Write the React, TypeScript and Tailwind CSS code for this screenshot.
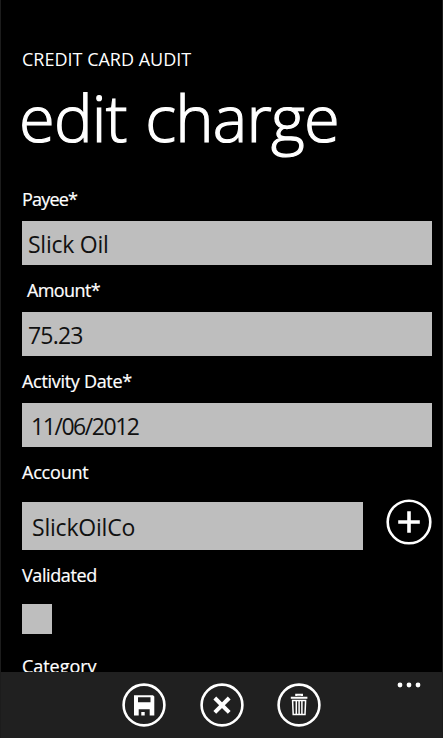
import React from 'react';

interface FieldProps {
  label: string;
  value: string;
  labelClass: string;
  valueClass: string;
}

const Field: React.FC<FieldProps> = ({ label, value, labelClass, valueClass }) => (
  <div className="mb-[15px]">
    <div className={`h-[32px] text-[18px] leading-[20px] whitespace-nowrap [-webkit-text-stroke:0.2px_white] ${labelClass}`}>{label}</div>
    <div className={`h-[44px] bg-[#bebebe] text-[#111] text-[23px] leading-[46px] whitespace-nowrap ${valueClass}`}>
      {value}
    </div>
  </div>
);

const Circle: React.FC<{ label: string; children: React.ReactNode }> = ({ label, children }) => (
  <button aria-label={label} className="block">
    <svg viewBox="0 0 44 44" className="block w-[44px] h-[44px]" fill="none">
      <circle cx="22" cy="22" r="20.4" stroke="#fff" strokeWidth="2.6" />
      {children}
    </svg>
  </button>
);

const App: React.FC = () => {
  return (
    <div className="flex flex-col w-[443px] h-[738px] overflow-hidden bg-black text-white border-x border-[#1c1c1c] font-['Open_Sans','Noto_Sans',sans-serif]">
      <main className="h-[672px] shrink-0 overflow-hidden pl-[21px] pr-[10px] pt-[47px]">
        <div className="h-[24px] text-[18px] leading-[24px] whitespace-nowrap">CREDIT CARD AUDIT</div>
        <h1 className="h-[118px] -ml-[3px] text-[65px] leading-[93px] font-light tracking-[-0.8px] [word-spacing:2.5px] whitespace-nowrap [-webkit-text-stroke:1.2px_white]">edit charge</h1>

        <Field label="Payee*" value="Slick Oil" labelClass="tracking-[-0.8px]" valueClass="pl-[6px] tracking-[-0.25px]" />
        <Field label="Amount*" value="75.23" labelClass="pl-[5px] tracking-[-0.6px]" valueClass="pl-[6px] tracking-[-0.8px]" />
        <Field label="Activity Date*" value="11/06/2012" labelClass="tracking-[-0.3px]" valueClass="pl-[9px] tracking-[-1.45px]" />

        <div className="h-[40px] text-[18px] leading-[20px] tracking-[-0.2px] [-webkit-text-stroke:0.2px_white]">Account</div>
        <div className="flex items-start justify-between h-[62px]">
          <div className="w-[341px] h-[48px] pl-[10px] bg-[#bebebe] text-[#111] text-[23px] leading-[50px] tracking-[-0.2px]">SlickOilCo</div>
          <button aria-label="add account" className="-mt-[3px]">
            <svg viewBox="0 0 46 46" className="block w-[46px] h-[46px]" fill="none" stroke="#fff">
              <circle cx="23" cy="23" r="21.3" strokeWidth="2.6" />
              <path d="M23 12.2v21.6M12.2 23h21.6" strokeWidth="3.6" />
            </svg>
          </button>
        </div>

        <div className="h-[40px] pt-px text-[18px] leading-[20px] tracking-[-0.4px] [-webkit-text-stroke:0.2px_white]">Validated</div>
        <div className="w-[30px] h-[30px] mb-[22px] bg-[#bebebe]" />
        <div className="text-[18px] leading-[20px] tracking-[-0.05px] [-webkit-text-stroke:0.2px_white]">Category</div>
      </main>

      <footer className="flex items-start h-[66px] shrink-0 bg-[#202020] pl-[121px] pt-[11px]">
        <div className="flex gap-[33.5px]">
          <Circle label="save">
            <path fill="#fff" fillRule="evenodd" d="M12 12.2h19l1.3 1.3v19H12zM16 14.3v5h12.5v-5zM16.7 26.3v6.2h2.6v-3.4h3.4v3.4h5v-6.2z" />
          </Circle>
          <Circle label="cancel">
            <path d="M14.8 15l14.4 14.4M29.2 15L14.8 29.4" stroke="#fff" strokeWidth="4" />
          </Circle>
          <Circle label="delete">
            <path d="M13.8 14.8h16.6M19.2 13v-1.3h5.8V13" stroke="#fff" strokeWidth="2" />
            <path d="M15.6 17.4h13L28 31.4H16.2zM19.3 18v13M22.1 18v13M24.9 18v13" stroke="#fff" strokeWidth="1.5" />
          </Circle>
        </div>
        <svg viewBox="0 0 26 8" className="w-[26px] h-[8px] ml-[75px] -mt-[2px]" fill="#fff">
          <circle cx="4" cy="4" r="2.4" />
          <circle cx="13" cy="4" r="2.4" />
          <circle cx="22" cy="4" r="2.4" />
        </svg>
      </footer>
    </div>
  );
};

export default App;
